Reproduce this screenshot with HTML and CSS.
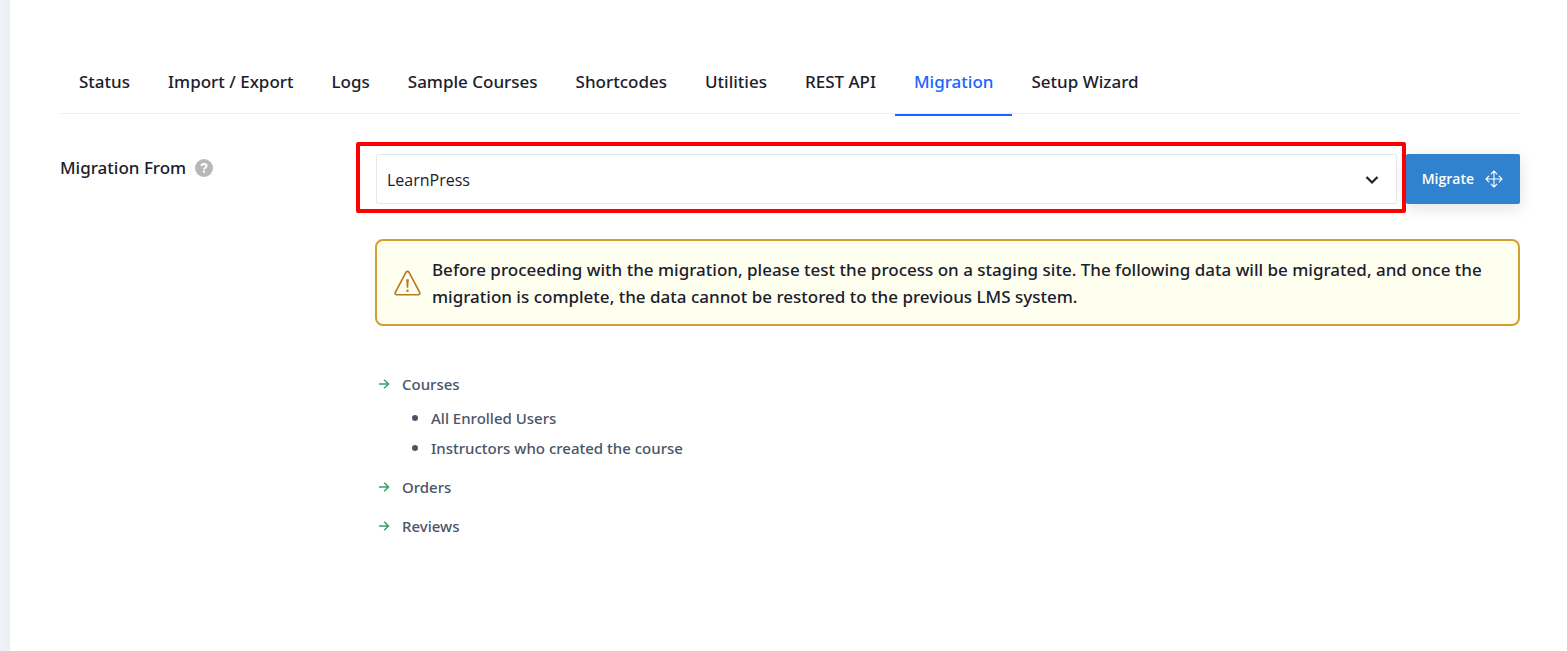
FILE: index.html
```html
<!DOCTYPE html>
<html lang="en">
<head>
<meta charset="utf-8">
<meta name="viewport" content="width=device-width, initial-scale=1">
<title>Tools - Migration</title>
<link rel="stylesheet" href="styles.css">
</head>
<body>
<main class="panel">
  <nav class="tabs" aria-label="Tools">
    <a class="tab" href="#status">Status</a>
    <a class="tab" href="#import">Import / Export</a>
    <a class="tab" href="#logs">Logs</a>
    <a class="tab" href="#samples">Sample Courses</a>
    <a class="tab" href="#shortcodes">Shortcodes</a>
    <a class="tab" href="#utilities">Utilities</a>
    <a class="tab" href="#api">REST API</a>
    <a class="tab tab-active" href="#migration" aria-current="page">Migration</a>
    <a class="tab" href="#wizard">Setup Wizard</a>
  </nav>
  <form class="migration">
    <div class="field-label">
      <label for="source">Migration From</label>
      <svg class="help" viewBox="0 0 18 18" role="img" aria-label="Help">
        <circle cx="9" cy="9" r="9" fill="#b8b8b8"/>
        <path d="M6.500 7.100C6.500 5.600 7.600 4.900 9 4.900s2.500.8 2.500 2.100c0 1.700-2.400 1.800-2.400 3.500" fill="none" stroke="#fff" stroke-width="2"/>
        <rect x="8" y="11.600" width="2.100" height="2.100" fill="#fff"/>
      </svg>
    </div>
    <div class="content">
      <div class="controls">
        <div class="select-box">
          <select class="select" id="source"><option>LearnPress</option></select>
          <svg class="chevron" viewBox="0 0 14 10" aria-hidden="true"><path d="M1.500 2l5.500 5.500L12.500 2" fill="none" stroke="#1a202c" stroke-width="2.200"/></svg>
        </div>
        <button class="migrate" type="button">Migrate
          <svg class="move" viewBox="0 0 18 18" aria-hidden="true"><path d="M9 1v16M1 9h16M6.200 3.800L9 1l2.800 2.800M6.200 14.200L9 17l2.800-2.800M3.800 6.200L1 9l2.800 2.800M14.200 6.200L17 9l-2.800 2.800" fill="none" stroke="#fff" stroke-width="1.100" stroke-linecap="round" stroke-linejoin="round"/></svg>
        </button>
      </div>
      <div class="alert" role="alert">
        <svg class="warning" viewBox="0 0 26 26" aria-hidden="true">
          <path d="M11.500 2.200a1.700 1.700 0 0 1 3 0l10.200 19.300a1.500 1.500 0 0 1-1.300 2.300H2.600a1.500 1.500 0 0 1-1.300-2.300z" fill="none" stroke="#b7791f" stroke-width="1.600" stroke-linejoin="round"/>
          <path d="M11.700 8.800h2.600l-.6 8.400h-1.400z" fill="#b7791f"/><circle cx="13" cy="19.900" r="1.200" fill="#b7791f"/>
        </svg>
        <p class="alert-text">Before proceeding with the migration, please test the process on a staging site. The following data will be migrated, and once the migration is complete, the data cannot be restored to the previous LMS system.</p>
      </div>
      <ul class="items">
        <li class="item">
          <svg class="arrow" viewBox="0 0 12 12" aria-hidden="true"><path d="M1 6h9.500M6.200 1.700L10.500 6l-4.300 4.300" fill="none" stroke="#38a169" stroke-width="1.500"/></svg>
          <div>Courses
            <ul class="details"><li>All Enrolled Users</li><li>Instructors who created the course</li></ul>
          </div>
        </li>
        <li class="item">
          <svg class="arrow" viewBox="0 0 12 12" aria-hidden="true"><path d="M1 6h9.500M6.200 1.700L10.500 6l-4.300 4.300" fill="none" stroke="#38a169" stroke-width="1.500"/></svg>
          <div>Orders</div>
        </li>
        <li class="item">
          <svg class="arrow" viewBox="0 0 12 12" aria-hidden="true"><path d="M1 6h9.500M6.200 1.700L10.500 6l-4.300 4.300" fill="none" stroke="#38a169" stroke-width="1.500"/></svg>
          <div>Reviews</div>
        </li>
      </ul>
    </div>
  </form>
</main>
</body>
</html>
```
FILE: styles.css
```css
* { box-sizing: border-box; }
body {
  margin: 0;
  padding-left: 10px;
  background: linear-gradient(90deg, #f0f4f8, #ebeff2 10px);
  color: #1a202c;
  font: 500 17px/27px "Noto Sans", sans-serif;
}
.panel {
  min-height: 100vh;
  padding: 50px 47px 50px 50px;
  background: #fff;
}
.tabs {
  display: flex;
  border-bottom: 1px solid #eeeeee;
}
.tab {
  padding: 18px 19px 19px;
  margin-bottom: -3px;
  border-bottom: 2px solid transparent;
  color: inherit;
  text-decoration: none;
  white-space: nowrap;
}
.tab-active {
  border-color: #1965ff;
  color: #1965ff;
}
.migration {
  display: flex;
  margin-top: 40px;
}
.field-label {
  display: flex;
  flex: 0 0 316px;
  align-items: center;
  align-self: flex-start;
  gap: 9px;
}
.help { width: 18px; height: 18px; }
.content { flex: 1; min-width: 0; }
.controls {
  display: flex;
  gap: 9px;
}
.select-box {
  position: relative;
  flex: 1;
}
.select-box::after {
  content: "";
  position: absolute;
  inset: -12px -9px -9px -20px;
  border: 4px solid #ff0000;
  border-radius: 2px;
  pointer-events: none;
}
.select {
  width: 100%;
  height: 50px;
  padding: 2px 40px 0 10px;
  appearance: none;
  border: 1px solid #e2e8f0;
  border-radius: 2px;
  background: #fff;
  color: inherit;
  font: 400 16px/24px "Open Sans", "Noto Sans", sans-serif;
}
.chevron {
  position: absolute;
  top: 21px;
  right: 18px;
  width: 14px;
  height: 10px;
  pointer-events: none;
}
.migrate {
  display: flex;
  flex: none;
  align-items: center;
  gap: 11px;
  height: 50px;
  padding: 0 17px 0 16px;
  border: 0;
  border-radius: 2px;
  background: #3182ce;
  box-shadow: 0 4px 16px rgba(0, 0, 0, 0.12);
  color: #fff;
  font: 600 14px/20px "Open Sans", "Noto Sans", sans-serif;
}
.move { width: 18px; height: 18px; }
.alert {
  display: flex;
  align-items: center;
  gap: 11px;
  margin: 35px 0 0 -1px;
  padding: 15px 16px 14px 17px;
  border: 2px solid #d69e2e;
  border-radius: 8px;
  background: #fffff0;
}
.warning { flex: none; width: 27px; height: 27px; }
.alert-text { margin: 0; }
.items {
  display: grid;
  gap: 9px;
  margin: 43px 0 0;
  padding: 0 0 0 2px;
  color: #4a5568;
  font: 500 15px/30px "Noto Sans", sans-serif;
  list-style: none;
}
.item { display: flex; gap: 12px; }
.arrow { flex: none; width: 12px; height: 12px; margin-top: 9px; }
.details { margin: 4px 0 0; padding-left: 29px; line-height: 29px; list-style: disc; }
.details li::marker { font-size: 18px; }
```
